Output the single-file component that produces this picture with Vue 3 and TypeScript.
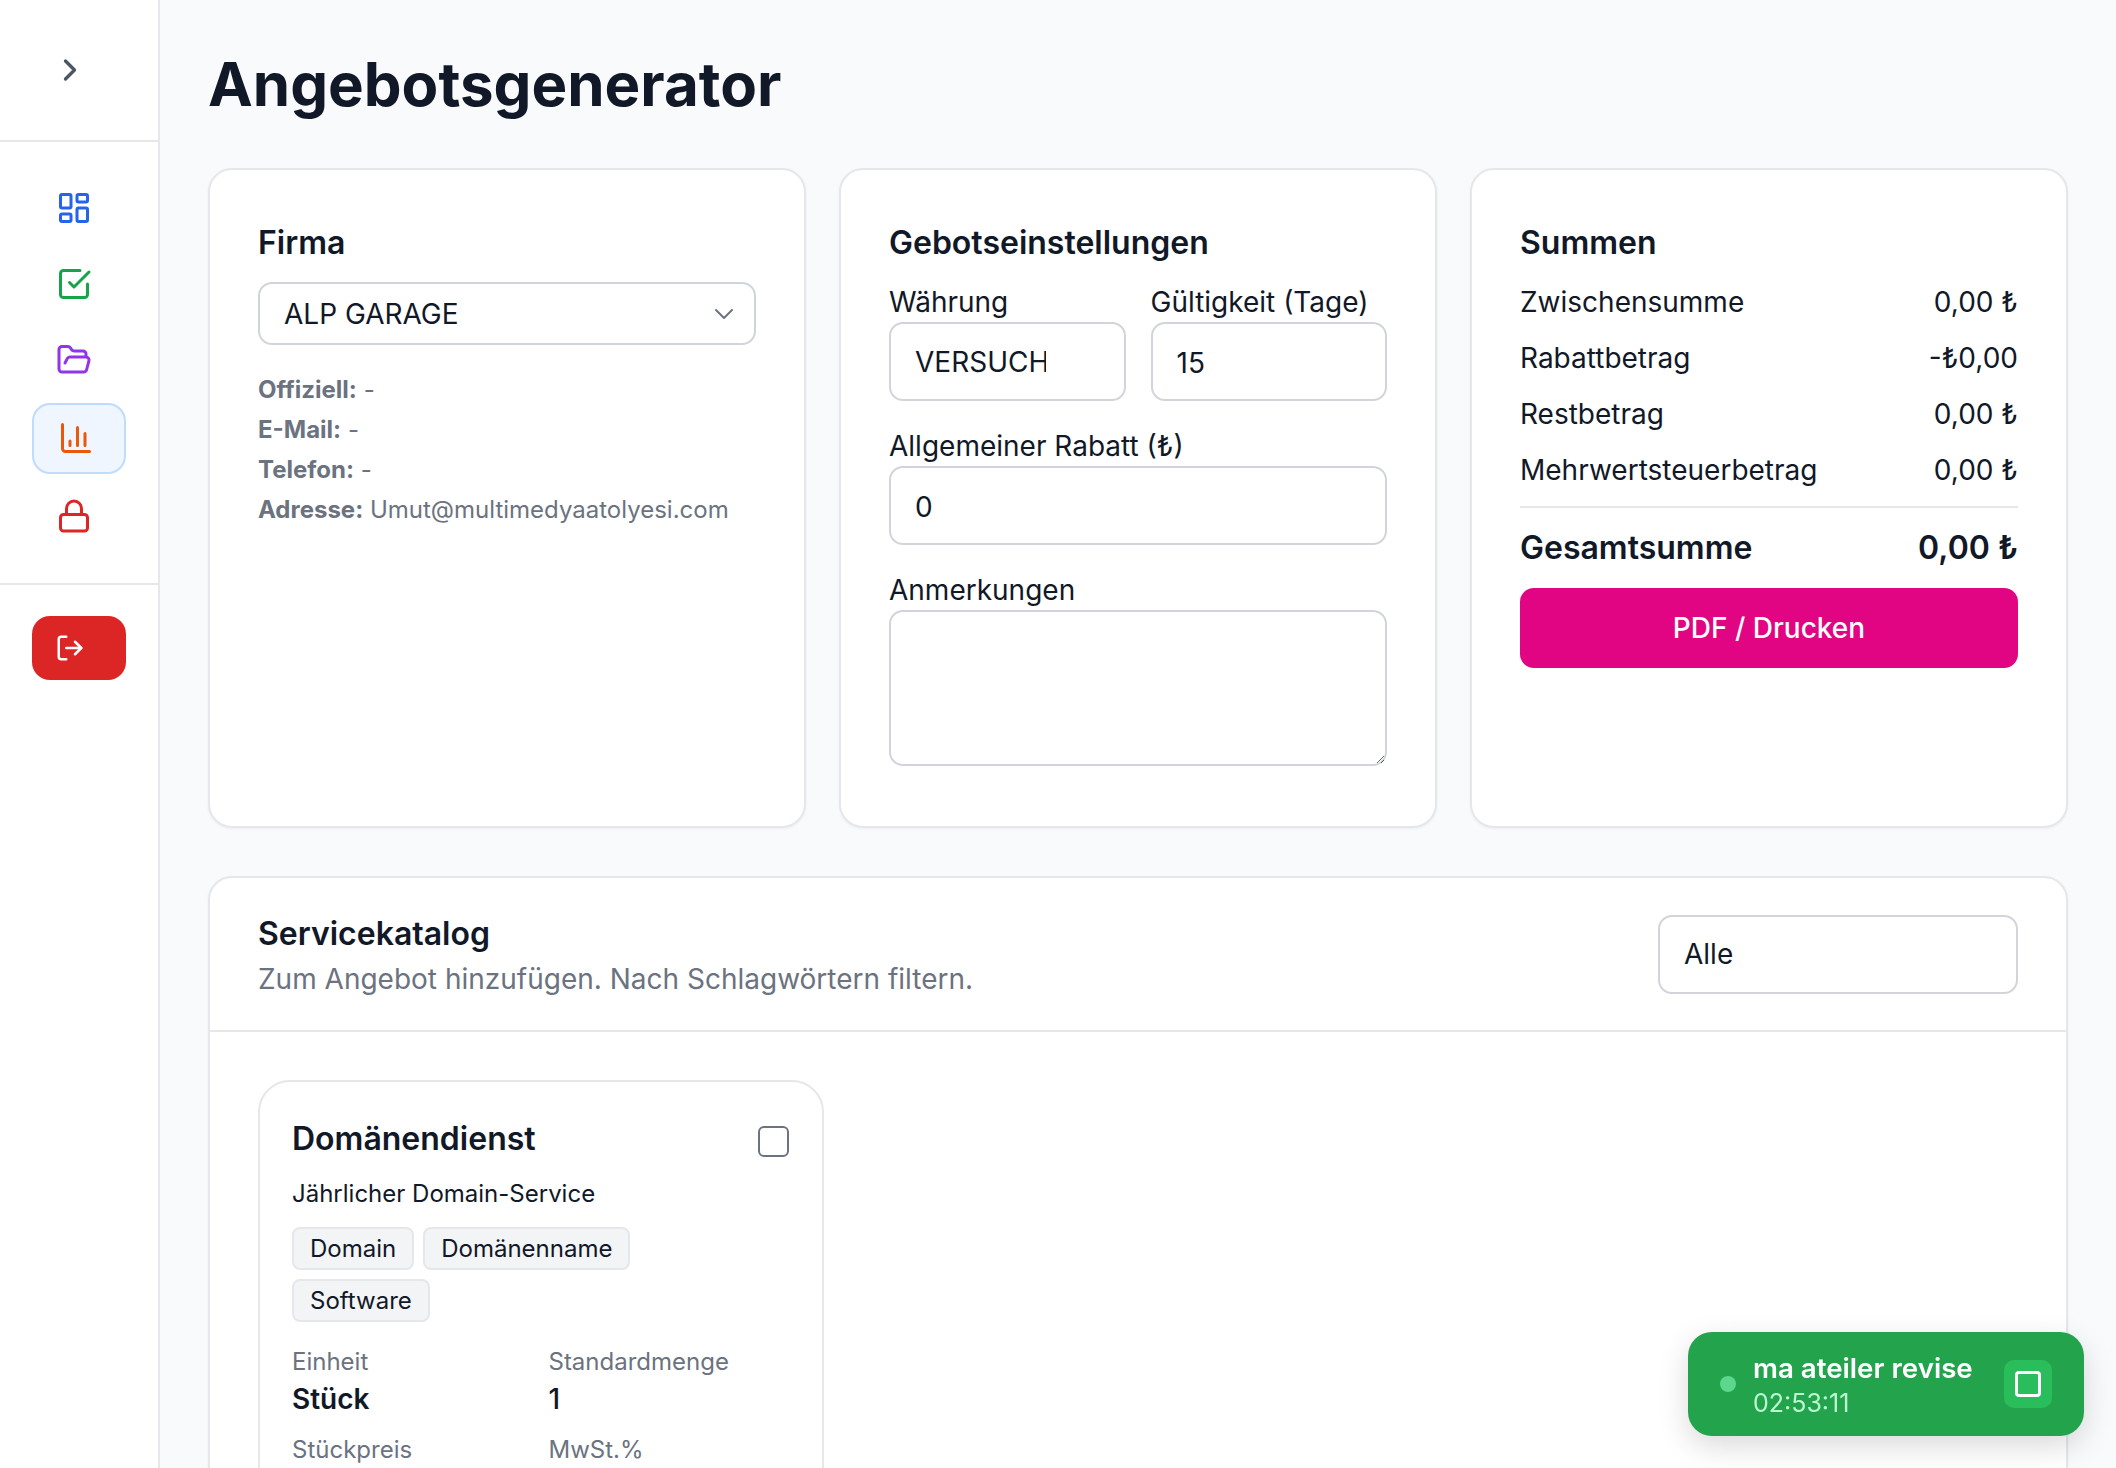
<script setup lang="ts">
const totals = [
  { label: 'Zwischensumme', value: '0,00 ₺' },
  { label: 'Rabattbetrag', value: '-₺0,00' },
  { label: 'Restbetrag', value: '0,00 ₺' },
  { label: 'Mehrwertsteuerbetrag', value: '0,00 ₺' }
]

const companyInfo = [
  { label: 'Offiziell:', value: '-' },
  { label: 'E-Mail:', value: '-' },
  { label: 'Telefon:', value: '-' },
  { label: 'Adresse:', value: 'Umut@multimedyaatolyesi.com' }
]

const tags = ['Domain', 'Domänenname', 'Software']
</script>

<template>
  <div class="app">
    <aside class="sidebar">
      <div class="side-top">
        <svg class="chevron" viewBox="0 0 24 24"><path d="m9 18 6-6-6-6" /></svg>
      </div>
      <nav class="side-nav">
        <a class="nav-item blue">
          <svg viewBox="0 0 24 24">
            <rect x="3" y="3" width="7" height="9" rx="1" />
            <rect x="14" y="3" width="7" height="5" rx="1" />
            <rect x="14" y="12" width="7" height="9" rx="1" />
            <rect x="3" y="16" width="7" height="5" rx="1" />
          </svg>
        </a>
        <a class="nav-item green">
          <svg viewBox="0 0 24 24">
            <path d="m9 11 3 3L22 4" />
            <path d="M21 12v7a2 2 0 0 1-2 2H5a2 2 0 0 1-2-2V5a2 2 0 0 1 2-2h11" />
          </svg>
        </a>
        <a class="nav-item purple">
          <svg viewBox="0 0 24 24">
            <path d="m6 14 1.5-2.9A2 2 0 0 1 9.24 10H20a2 2 0 0 1 1.94 2.5l-1.54 6a2 2 0 0 1-1.95 1.5H4a2 2 0 0 1-2-2V5a2 2 0 0 1 2-2h3.9a2 2 0 0 1 1.69.9l.81 1.2a2 2 0 0 0 1.69.9H18a2 2 0 0 1 2 2v2" />
          </svg>
        </a>
        <a class="nav-item orange active">
          <svg viewBox="0 0 24 24">
            <path d="M3 3v16a2 2 0 0 0 2 2h16" />
            <path d="M18 17V9" />
            <path d="M13 17V5" />
            <path d="M8 17v-3" />
          </svg>
        </a>
        <a class="nav-item red">
          <svg viewBox="0 0 24 24">
            <rect x="3" y="11" width="18" height="11" rx="2" />
            <path d="M7 11V7a5 5 0 0 1 10 0v4" />
          </svg>
        </a>
      </nav>
      <div class="side-bottom">
        <button class="logout">
          <svg viewBox="0 0 24 24">
            <path d="M9 21H5a2 2 0 0 1-2-2V5a2 2 0 0 1 2-2h4" />
            <polyline points="16 17 21 12 16 7" />
            <line x1="21" y1="12" x2="9" y2="12" />
          </svg>
        </button>
      </div>
    </aside>

    <main class="main">
      <h1 class="page-title">Angebotsgenerator</h1>

      <div class="top-grid">
        <section class="card">
          <h2 class="card-title">Firma</h2>
          <select class="field select-arrow firma-select">
            <option>ALP GARAGE</option>
          </select>
          <div class="company-info">
            <p v-for="row in companyInfo" :key="row.label">
              <strong>{{ row.label }}</strong> {{ row.value }}
            </p>
          </div>
        </section>

        <section class="card">
          <h2 class="card-title">Gebotseinstellungen</h2>
          <div class="two-col">
            <label class="form-group">
              <span class="label">Währung</span>
              <select class="field field-tall currency">
                <option>VERSUCH</option>
              </select>
            </label>
            <label class="form-group">
              <span class="label">Gültigkeit (Tage)</span>
              <input class="field field-tall" type="number" value="15" />
            </label>
          </div>
          <label class="form-group spaced">
            <span class="label">Allgemeiner Rabatt (₺)</span>
            <input class="field field-tall" type="number" value="0" />
          </label>
          <label class="form-group spaced">
            <span class="label">Anmerkungen</span>
            <textarea class="field notes"></textarea>
          </label>
        </section>

        <section class="card">
          <h2 class="card-title">Summen</h2>
          <div class="total-rows">
            <div v-for="row in totals" :key="row.label" class="total-row">
              <span>{{ row.label }}</span>
              <span>{{ row.value }}</span>
            </div>
          </div>
          <div class="grand-total">
            <span>Gesamtsumme</span>
            <span>0,00 ₺</span>
          </div>
          <button class="pdf-btn">PDF / Drucken</button>
        </section>
      </div>

      <section class="catalog">
        <header class="catalog-head">
          <div>
            <h2 class="card-title">Servicekatalog</h2>
            <p class="catalog-sub">Zum Angebot hinzufügen. Nach Schlagwörtern filtern.</p>
          </div>
          <select class="field field-tall filter">
            <option>Alle</option>
          </select>
        </header>
        <div class="catalog-body">
          <article class="service">
            <div class="service-head">
              <h3>Domänendienst</h3>
              <input class="check" type="checkbox" />
            </div>
            <p class="service-desc">Jährlicher Domain-Service</p>
            <div class="tags">
              <span v-for="tag in tags" :key="tag" class="tag">{{ tag }}</span>
            </div>
            <dl class="meta">
              <div>
                <dt>Einheit</dt>
                <dd class="strong">Stück</dd>
              </div>
              <div>
                <dt>Standardmenge</dt>
                <dd>1</dd>
              </div>
              <div>
                <dt>Stückpreis</dt>
              </div>
              <div>
                <dt>MwSt.%</dt>
              </div>
            </dl>
          </article>
        </div>
      </section>
    </main>

    <div class="timer">
      <span class="timer-dot"></span>
      <div class="timer-text">
        <div class="timer-name">ma ateiler revise</div>
        <div class="timer-time">02:53:11</div>
      </div>
      <button class="timer-stop"><span></span></button>
    </div>
  </div>
</template>

<style>
html,
body {
  margin: 0;
  height: 100%;
  overflow: hidden;
}
</style>

<style scoped>
* {
  box-sizing: border-box;
}

.app {
  display: flex;
  height: 100vh;
  overflow: hidden;
  background: #f9fafb;
  font-family: Inter, 'Liberation Sans', sans-serif;
  color: #111827;
}

.sidebar {
  flex: 0 0 160px;
  background: #fff;
  border-right: 2px solid #e5e7eb;
}

.side-top {
  height: 142px;
  border-bottom: 2px solid #e5e7eb;
  display: flex;
  align-items: center;
  justify-content: center;
  padding-right: 18px;
}

.chevron {
  width: 36px;
  height: 36px;
  fill: none;
  stroke: #4b5563;
  stroke-width: 2.2;
  stroke-linecap: round;
  stroke-linejoin: round;
}

.side-nav {
  padding: 30px 32px 32px;
  display: flex;
  flex-direction: column;
  gap: 6px;
  border-bottom: 2px solid #e5e7eb;
}

.nav-item {
  height: 71px;
  display: flex;
  align-items: center;
  padding-left: 22px;
  border: 2px solid transparent;
  border-radius: 18px;
}

.nav-item svg {
  width: 36px;
  height: 36px;
  fill: none;
  stroke: currentColor;
  stroke-width: 2;
  stroke-linecap: round;
  stroke-linejoin: round;
}

.nav-item.active {
  background: #eff6ff;
  border-color: #bfdbfe;
  padding-left: 24px;
}

.blue { color: #2563eb; }
.green { color: #16a34a; }
.purple { color: #9333ea; }
.orange { color: #ea580c; }
.red { color: #dc2626; }

.green svg,
.orange svg {
  margin-bottom: 2px;
}

.purple svg {
  margin-bottom: 4px;
}

.side-bottom {
  padding: 31px 32px;
}

.logout {
  width: 94px;
  height: 64px;
  background: #dc2626;
  border: none;
  border-radius: 18px;
  display: flex;
  align-items: center;
  padding: 0 0 0 23px;
}

.logout svg {
  width: 30px;
  height: 30px;
  fill: none;
  stroke: #fff;
  stroke-width: 2;
  stroke-linecap: round;
  stroke-linejoin: round;
}

.main {
  flex: 1;
  min-width: 0;
  padding: 48px;
}

.page-title {
  margin: 0 0 48px;
  font-size: 60px;
  line-height: 72px;
  font-weight: 700;
}

.top-grid {
  display: grid;
  grid-template-columns: repeat(3, 1fr);
  gap: 33px;
}

.card {
  background: #fff;
  border: 2px solid #e5e7eb;
  border-radius: 24px;
  box-shadow: 0 1px 3px rgba(0, 0, 0, 0.05);
  padding: 48px 48px 58px;
  min-height: 660px;
}

.card-title {
  margin: 0;
  font-size: 32px;
  line-height: 50px;
  font-weight: 600;
}

.field {
  display: block;
  width: 100%;
  background: #fff;
  border: 2px solid #d1d5db;
  border-radius: 14px;
  font-family: inherit;
  font-size: 28px;
  color: #111827;
  padding: 0 24px;
  appearance: none;
  outline: none;
}

.field-tall {
  height: 79px;
}

input.field-tall {
  padding-top: 2px;
}

.select-arrow {
  background-image: url("data:image/svg+xml,%3Csvg xmlns='http://www.w3.org/2000/svg' viewBox='0 0 20 12' fill='none' stroke='%236b7280' stroke-width='2' stroke-linecap='round' stroke-linejoin='round'%3E%3Cpath d='M2 2l8 8 8-8'/%3E%3C/svg%3E");
  background-repeat: no-repeat;
  background-position: right 20px center;
  background-size: 20px 12px;
}

.firma-select {
  height: 63px;
  margin-top: 14px;
}

.company-info {
  margin-top: 25px;
  font-size: 24px;
  line-height: 40px;
  color: #6b7280;
}

.company-info p {
  margin: 0;
}

.company-info strong {
  font-weight: 700;
}

.two-col {
  display: grid;
  grid-template-columns: 1fr 1fr;
  gap: 25px;
  margin-top: 14px;
}

.form-group {
  display: block;
}

.form-group.spaced {
  margin-top: 25px;
}

.label {
  display: block;
  font-size: 28px;
  line-height: 40px;
}

.currency {
  padding-right: 78px;
}

.notes {
  height: 156px;
  resize: vertical;
}

.total-rows {
  margin-top: 14px;
}

.total-row {
  display: flex;
  justify-content: space-between;
  font-size: 28px;
  line-height: 40px;
  margin-bottom: 16px;
}

.grand-total {
  display: flex;
  justify-content: space-between;
  border-top: 2px solid #e5e7eb;
  margin-top: 16px;
  padding-top: 20px;
  font-size: 32px;
  line-height: 40px;
  font-weight: 600;
}

.pdf-btn {
  display: block;
  width: 100%;
  height: 80px;
  margin-top: 20px;
  background: #e20583;
  color: #fff;
  border: none;
  border-radius: 14px;
  font-family: inherit;
  font-size: 28px;
  font-weight: 500;
}

.catalog {
  margin-top: 48px;
  background: #fff;
  border: 2px solid #e5e7eb;
  border-radius: 24px;
  box-shadow: 0 1px 3px rgba(0, 0, 0, 0.05);
}

.catalog-head {
  display: flex;
  justify-content: space-between;
  align-items: center;
  height: 154px;
  padding: 0 48px;
  border-bottom: 2px solid #e5e7eb;
}

.catalog-sub {
  margin: 0;
  font-size: 28px;
  line-height: 40px;
  color: #6b7280;
}

.filter {
  width: 360px;
}

.catalog-body {
  padding: 48px;
}

.service {
  width: 566px;
  border: 2px solid #e5e7eb;
  border-radius: 32px;
  padding: 32px 33px 32px 32px;
}

.service-head {
  display: flex;
  justify-content: space-between;
  align-items: flex-start;
}

.service-head h3 {
  margin: 0;
  font-size: 32px;
  line-height: 50px;
  font-weight: 600;
}

.check {
  appearance: none;
  width: 31px;
  height: 31px;
  margin: 12px 0 0;
  border: 2px solid #6b7280;
  border-radius: 6px;
  background: #fff;
}

.service-desc {
  margin: 12px 0 0;
  font-size: 24px;
  line-height: 36px;
}

.tags {
  display: flex;
  flex-wrap: wrap;
  gap: 9px;
  margin-top: 15px;
  width: 400px;
}

.tag {
  display: block;
  height: 43px;
  padding: 0 16px;
  background: #f3f4f6;
  border: 2px solid #e5e7eb;
  border-radius: 8px;
  font-size: 24px;
  line-height: 39px;
}

.meta {
  margin: 22px 0 0;
  display: grid;
  grid-template-columns: 1fr 1fr;
  column-gap: 16px;
  row-gap: 13px;
}

.meta dt {
  font-size: 24px;
  line-height: 35px;
  color: #6b7280;
}

.meta dd {
  margin: 0;
  font-size: 28px;
  line-height: 40px;
  font-weight: 500;
}

.meta dd.strong {
  font-weight: 600;
}

.timer {
  position: fixed;
  left: 1688px;
  top: 1332px;
  width: 396px;
  height: 104px;
  background: #22a34c;
  border-radius: 24px;
  box-shadow: 0 10px 30px rgba(0, 0, 0, 0.15);
  display: flex;
  align-items: center;
  padding: 0 32px;
}

.timer-dot {
  width: 16px;
  height: 16px;
  border-radius: 50%;
  background: #5fd68d;
  margin-right: 17px;
}

.timer-text {
  flex: 1;
  color: #fff;
  padding-top: 2px;
}

.timer-name {
  font-size: 27.7px;
  line-height: 36px;
  font-weight: 600;
}

.timer-time {
  font-size: 25px;
  line-height: 34px;
  color: #bbf7d0;
}

.timer-stop {
  width: 48px;
  height: 48px;
  border: none;
  border-radius: 10px;
  background: #2abd5c;
  display: flex;
  align-items: center;
  justify-content: center;
  padding: 0;
}

.timer-stop span {
  width: 26px;
  height: 26px;
  border: 3px solid #fff;
  border-radius: 4px;
}
</style>
